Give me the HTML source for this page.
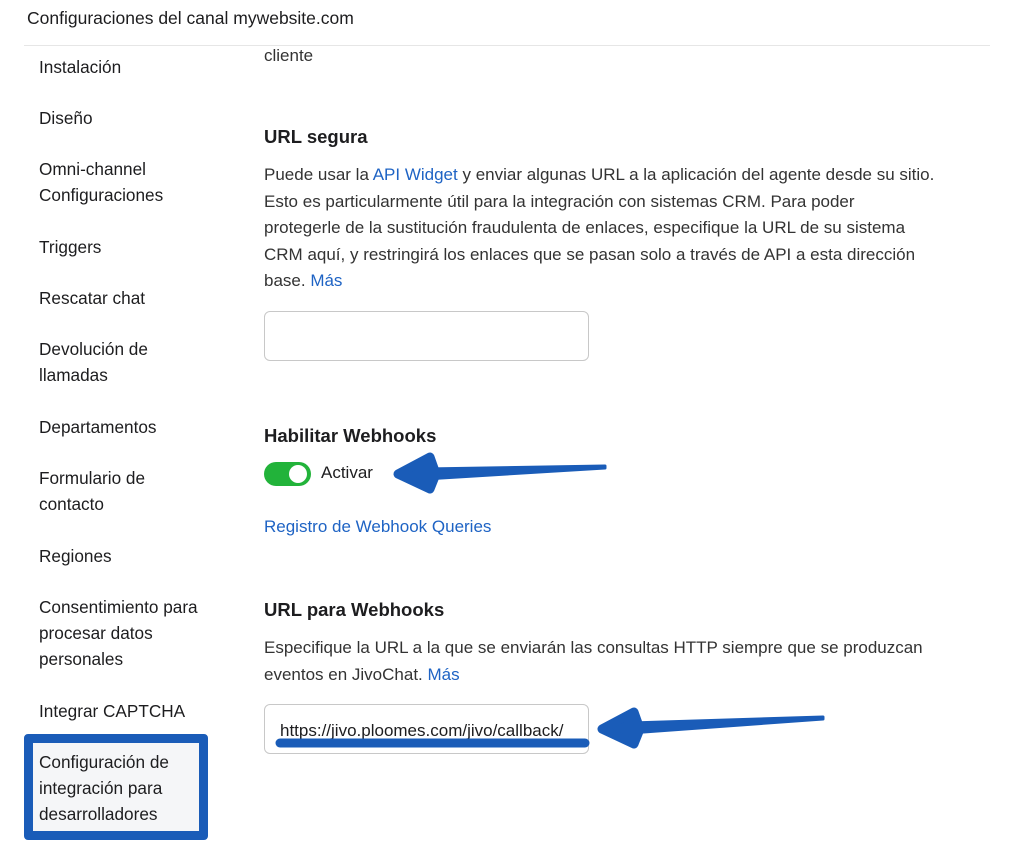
<!DOCTYPE html><html><head><meta charset="utf-8"><style>
body{margin:0;width:1012px;height:853px;background:#fff;font-family:"Liberation Sans",sans-serif;color:#1d1d1f;position:relative;overflow:hidden}
.a{position:absolute;white-space:nowrap}
.t{font-size:17px;line-height:26.5px}
.s{font-size:17.2px;line-height:26px;left:39px}
h3{margin:0;font-size:18.5px;font-weight:bold;position:absolute;left:264px}
.l{color:#1e63c4}
.p{position:absolute;left:264px;font-size:17px;line-height:26.5px;color:#333;white-space:nowrap}
.inp{position:absolute;left:264px;width:325px;height:48px;border:1px solid #c8c8c8;border-radius:6px;box-sizing:border-box}
</style></head><body>
<div class="a" style="left:27px;top:8px;font-size:17.5px">Configuraciones del canal mywebsite.com</div>
<div class="a" style="left:24px;top:45px;width:966px;height:1px;background:#e6e6e6"></div>
<div class="a s" style="top:54px">Instalación</div>
<div class="a s" style="top:105px">Diseño</div>
<div class="a s" style="top:156px">Omni-channel<br>Configuraciones</div>
<div class="a s" style="top:234px">Triggers</div>
<div class="a s" style="top:285px">Rescatar chat</div>
<div class="a s" style="top:336px">Devolución de<br>llamadas</div>
<div class="a s" style="top:414px">Departamentos</div>
<div class="a s" style="top:465px">Formulario de<br>contacto</div>
<div class="a s" style="top:543px">Regiones</div>
<div class="a s" style="top:594px">Consentimiento para<br>procesar datos<br>personales</div>
<div class="a s" style="top:698px">Integrar CAPTCHA</div>
<div class="a" style="left:24px;top:734px;width:166px;height:88px;border:9px solid #1a5cb8;border-radius:4px;background:#f5f6f8"></div>
<div class="a s" style="top:749px">Configuración de<br>integración para<br>desarrolladores</div>

<div class="p" style="top:43px">cliente</div>
<h3 style="top:126px">URL segura</h3>
<div class="p" style="top:162px">Puede usar la <span class="l">API Widget</span> y enviar algunas URL a la aplicación del agente desde su sitio.<br>Esto es particularmente útil para la integración con sistemas CRM. Para poder<br>protegerle de la sustitución fraudulenta de enlaces, especifique la URL de su sistema<br>CRM aquí, y restringirá los enlaces que se pasan solo a través de API a esta dirección<br>base. <span class="l">Más</span></div>
<div class="inp" style="top:311px;height:50px"></div>
<h3 style="top:425px">Habilitar Webhooks</h3>
<div class="a" style="left:264px;top:462px;width:47px;height:24px;border-radius:12px;background:#22b33a"></div>
<div class="a" style="left:289px;top:465px;width:18px;height:18px;border-radius:50%;background:#fff"></div>
<div class="a t" style="left:321px;top:460px">Activar</div>
<div class="a t l" style="left:264px;top:514px">Registro de Webhook Queries</div>
<h3 style="top:599px">URL para Webhooks</h3>
<div class="p" style="top:635px">Especifique la URL a la que se enviarán las consultas HTTP siempre que se produzcan<br>eventos en JivoChat. <span class="l">Más</span></div>
<div class="inp" style="top:704px;height:50px"></div>
<div class="a t" style="left:280px;top:718px">https://jivo.ploomes.com/jivo/callback/</div>
<svg class="a" style="left:0;top:0" width="1012" height="853">
<line x1="280" y1="743" x2="585" y2="743" stroke="#1a5cb8" stroke-width="9" stroke-linecap="round"/>
<g fill="#1a5cb8" stroke="#1a5cb8" stroke-linejoin="round" stroke-linecap="round">
<path d="M605 466 L425 469 L425 479 L605 468Z" stroke-width="3"/>
<path d="M430 457 L398 474 L430 489 L436 474Z" stroke-width="9"/>
<path d="M823 717 L630 723 L630 733 L823 719Z" stroke-width="3"/>
<path d="M634 712 L602 729 L634 744 L640 729Z" stroke-width="9"/>
</g></svg>
</body></html>
